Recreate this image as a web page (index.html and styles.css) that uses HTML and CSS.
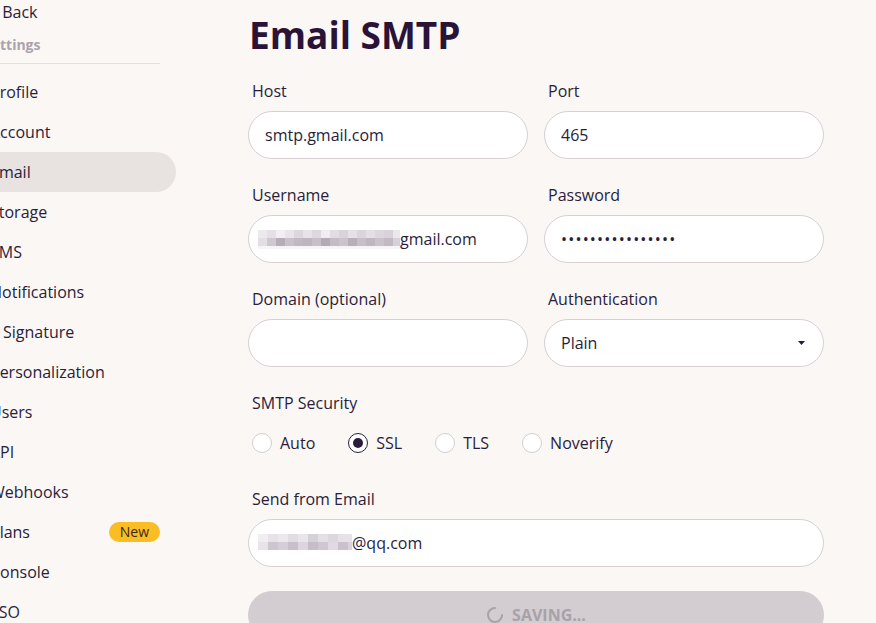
FILE: index.html
```html
<!DOCTYPE html>
<html lang="en">
<head>
<meta charset="utf-8">
<title>Email SMTP</title>
<link rel="stylesheet" href="styles.css">
</head>
<body>
<div class="page">
  <aside class="sidebar">
    <div class="back">← Back</div>
    <div class="section-title">Settings</div>
    <div class="divider"></div>
    <nav class="nav">
      <div class="nav-item">Profile</div>
      <div class="nav-item">Account</div>
      <div class="nav-item active">Email</div>
      <div class="nav-item">Storage</div>
      <div class="nav-item">SMS</div>
      <div class="nav-item">Notifications</div>
      <div class="nav-item">E Signature</div>
      <div class="nav-item">Personalization</div>
      <div class="nav-item">Users</div>
      <div class="nav-item">API</div>
      <div class="nav-item">Webhooks</div>
      <div class="nav-item">Plans <span class="badge">New</span></div>
      <div class="nav-item">Console</div>
      <div class="nav-item">SSO</div>
    </nav>
  </aside>
  <main class="main">
    <h1 class="title">Email SMTP</h1>
    <div class="grid">
      <div class="field">
        <label class="label">Host</label>
        <div class="input">smtp.gmail.com</div>
      </div>
      <div class="field">
        <label class="label">Port</label>
        <div class="input">465</div>
      </div>
      <div class="field">
        <label class="label">Username</label>
        <div class="input">
          <svg class="mosaic" width="142" height="24" viewBox="0 0 142 24">
            <rect x="0" y="0" width="142" height="24" fill="#fff"/>
            <rect x="0" y="3" width="9" height="8" fill="#ece9ed"/>
            <rect x="9" y="3" width="9" height="8" fill="#e4e0e6"/>
            <rect x="18" y="3" width="9" height="8" fill="#f1eff2"/>
            <rect x="27" y="3" width="9" height="8" fill="#e8e5ea"/>
            <rect x="36" y="3" width="9" height="8" fill="#dcd6dd"/>
            <rect x="45" y="3" width="9" height="8" fill="#e6e2e8"/>
            <rect x="54" y="3" width="9" height="8" fill="#ddd8df"/>
            <rect x="63" y="3" width="9" height="8" fill="#f0edf0"/>
            <rect x="72" y="3" width="9" height="8" fill="#e2dde4"/>
            <rect x="81" y="3" width="9" height="8" fill="#d9d3da"/>
            <rect x="90" y="3" width="9" height="8" fill="#e5e1e6"/>
            <rect x="99" y="3" width="9" height="8" fill="#dad5dc"/>
            <rect x="108" y="3" width="9" height="8" fill="#e3dfe5"/>
            <rect x="117" y="3" width="9" height="8" fill="#dcd7de"/>
            <rect x="126" y="3" width="9" height="8" fill="#d7d2d9"/>
            <rect x="135" y="3" width="7" height="8" fill="#ebe8ec"/>
            <rect x="0" y="11" width="9" height="8" fill="#e2dee4"/>
            <rect x="9" y="11" width="9" height="8" fill="#cfc8d0"/>
            <rect x="18" y="11" width="9" height="8" fill="#b8acb8"/>
            <rect x="27" y="11" width="9" height="8" fill="#c8c0ca"/>
            <rect x="36" y="11" width="9" height="8" fill="#c1b8c3"/>
            <rect x="45" y="11" width="9" height="8" fill="#bdb4c1"/>
            <rect x="54" y="11" width="9" height="8" fill="#c7bfca"/>
            <rect x="63" y="11" width="9" height="8" fill="#b6aab6"/>
            <rect x="72" y="11" width="9" height="8" fill="#c4bbc5"/>
            <rect x="81" y="11" width="9" height="8" fill="#cbc3cc"/>
            <rect x="90" y="11" width="9" height="8" fill="#b9aeba"/>
            <rect x="99" y="11" width="9" height="8" fill="#c6bec8"/>
            <rect x="108" y="11" width="9" height="8" fill="#bfb6c2"/>
            <rect x="117" y="11" width="9" height="8" fill="#c9c1cb"/>
            <rect x="126" y="11" width="9" height="8" fill="#c2b9c5"/>
            <rect x="135" y="11" width="7" height="8" fill="#d6d0d8"/>
            <rect x="0" y="19" width="142" height="3" fill="#f6f4f6"/>
          </svg><span>gmail.com</span>
        </div>
      </div>
      <div class="field">
        <label class="label">Password</label>
        <div class="input dots">••••••••••••••••</div>
      </div>
      <div class="field">
        <label class="label">Domain (optional)</label>
        <div class="input"></div>
      </div>
      <div class="field">
        <label class="label">Authentication</label>
        <div class="input select">
          <span>Plain</span>
          <svg class="caret" width="7" height="4" viewBox="0 0 7 4"><path d="M0 0H7L3.5 4Z" fill="#2a1a3a"/></svg>
        </div>
      </div>
    </div>

    <div class="security">
      <label class="label">SMTP Security</label>
      <div class="radios">
        <span class="radio"><span class="dot"></span>Auto</span>
        <span class="radio checked"><span class="dot"></span>SSL</span>
        <span class="radio"><span class="dot"></span>TLS</span>
        <span class="radio"><span class="dot"></span>Noverify</span>
      </div>
    </div>

    <div class="field">
      <label class="label">Send from Email</label>
      <div class="input">
        <svg class="mosaic" width="94" height="24" viewBox="0 0 94 24">
          <rect x="0" y="0" width="94" height="24" fill="#fff"/>
          <rect x="0" y="3" width="10" height="8" fill="#f0eef1"/>
          <rect x="10" y="3" width="10" height="8" fill="#e6e2e8"/>
          <rect x="20" y="3" width="10" height="8" fill="#ebe8ec"/>
          <rect x="30" y="3" width="10" height="8" fill="#e0dce2"/>
          <rect x="40" y="3" width="10" height="8" fill="#e9e6ea"/>
          <rect x="50" y="3" width="10" height="8" fill="#d6d0d8"/>
          <rect x="60" y="3" width="10" height="8" fill="#e3dfe5"/>
          <rect x="70" y="3" width="10" height="8" fill="#dcd7de"/>
          <rect x="80" y="3" width="14" height="8" fill="#e6e2e8"/>
          <rect x="0" y="11" width="10" height="8" fill="#e7e4e9"/>
          <rect x="10" y="11" width="10" height="8" fill="#cdc6cf"/>
          <rect x="20" y="11" width="10" height="8" fill="#d4ced6"/>
          <rect x="30" y="11" width="10" height="8" fill="#c7bfc9"/>
          <rect x="40" y="11" width="10" height="8" fill="#dbd6dd"/>
          <rect x="50" y="11" width="10" height="8" fill="#c5bdc7"/>
          <rect x="60" y="11" width="10" height="8" fill="#cfc8d1"/>
          <rect x="70" y="11" width="10" height="8" fill="#e0dbe2"/>
          <rect x="80" y="11" width="10" height="8" fill="#c9c2cb"/>
          <rect x="90" y="11" width="4" height="8" fill="#d9d4db"/>
        </svg><span>@qq.com</span>
      </div>
    </div>

    <button class="save">
      <svg class="spinner" width="18" height="18" viewBox="0 0 18 18"><path d="M9 2A7 7 0 1 0 16 9" fill="none" stroke="#a9a1a9" stroke-width="2" stroke-linecap="round"/></svg>
      <span>SAVING...</span>
    </button>
  </main>
</div>
</body>
</html>
```

FILE: styles.css
```css
* { box-sizing: border-box; }
html, body { margin: 0; padding: 0; }
body {
  background: #faf7f5;
  color: #2a1d3a;
  font-family: "Open Sans", "Noto Sans", sans-serif;
  font-size: 16px;
  overflow: hidden;
  height: 623px;
}
.page {
  display: flex;
  gap: 72px;
  align-items: flex-start;
}
.sidebar {
  width: 203px;
  margin-left: -27px;
  flex: none;
}
.back {
  height: 24px;
  line-height: 24px;
  padding-left: 12px;
  margin-left: -3px;
  white-space: nowrap;
}
.section-title {
  font-size: 14px;
  font-weight: 700;
  color: #aaa3ad;
  padding-left: 11px;
  margin-top: 9px;
  line-height: 24px;
}
.divider {
  height: 1px;
  background: #e4dfdd;
  margin: 6px 16px 8px 16px;
}
.nav { display: flex; flex-direction: column; }
.nav-item {
  height: 40px;
  line-height: 24px;
  padding: 8px 16px 8px 17px;
  border-radius: 20px;
  display: flex;
  justify-content: space-between;
  align-items: center;
  white-space: nowrap;
}
.nav-item.active { background: #e8e2e0; }
.badge {
  background: #fbbd24;
  color: #3b2a10;
  font-size: 14px;
  line-height: 20px;
  height: 20px;
  padding: 0 11px;
  border-radius: 10px;
}
.main {
  width: 576px;
  flex: none;
}
.title {
  margin: 10px 0 0 1px;
  font-size: 37px;
  line-height: 50px;
  font-weight: 700;
  color: #2b1338;
}
.grid {
  margin-top: 19px;
  display: grid;
  grid-template-columns: 280px 280px;
  column-gap: 16px;
  row-gap: 24px;
}
.field { display: flex; flex-direction: column; gap: 8px; }
.label {
  display: block;
  line-height: 24px;
  padding-left: 4px;
}
.input {
  height: 48px;
  border: 1px solid #d6d0d3;
  border-radius: 24px;
  background: #fff;
  padding: 0 16px;
  display: flex;
  align-items: center;
  white-space: nowrap;
}
.mosaic { display: block; margin-left: -7px; flex: none; }
.dots { letter-spacing: 1.2px; font-size: 16px; }
.select { justify-content: space-between; padding-right: 18px; }
.caret { display: block; }
.security { margin-top: 24px; }
.radios {
  margin-top: 16px;
  display: flex;
  gap: 33px;
  padding-left: 4px;
  height: 24px;
  align-items: center;
}
.radio { display: flex; align-items: center; gap: 8px; }
.radio .dot {
  width: 20px;
  height: 20px;
  border-radius: 50%;
  border: 1px solid #d3cdd1;
  background: #fff;
  display: flex;
  align-items: center;
  justify-content: center;
}
.radio.checked .dot { border-color: #2a1d3a; }
.radio.checked .dot::after {
  content: "";
  width: 10px;
  height: 10px;
  border-radius: 50%;
  background: #2a1d3a;
}
.security + .field { margin-top: 32px; }
.save {
  margin-top: 24px;
  width: 576px;
  height: 48px;
  border: none;
  border-radius: 24px;
  background: #d3ccd0;
  color: #a9a1a9;
  font-family: inherit;
  font-size: 16px;
  font-weight: 700;
  display: flex;
  align-items: center;
  justify-content: center;
  gap: 8px;
}
.spinner { display: block; }
```
